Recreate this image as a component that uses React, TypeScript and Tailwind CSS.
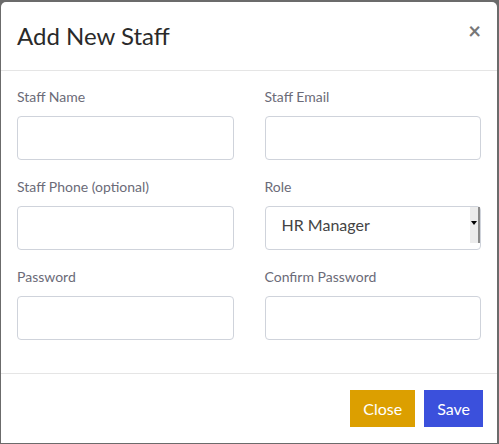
import React from "react";

function Field({ label, type = "text" }: { label: string; type?: string }) {
  return (
    <div className="mb-4">
      <label className="mb-2 block text-[14px] leading-[22px] text-[#6b6b78]">{label}</label>
      <input
        type={type}
        className="block h-[44px] w-full rounded-[4px] border border-[#cfd3db] bg-white px-3 text-[16px] text-[#444] outline-none"
      />
    </div>
  );
}

export default function App() {
  return (
    <div
      className="h-screen overflow-hidden bg-[#6b6b6b] pl-[1px] pr-[2px] pt-[2px]"
      style={{ fontFamily: "Lato, 'Open Sans', sans-serif" }}
    >
      <div className="rounded-t-[5px] bg-white">
        {/* header */}
        <div className="flex items-start justify-between border-b border-[#e5e5e5] px-4 py-4">
          <h1 className="text-[24px] font-normal leading-[36px] text-[#2a2a2a]">Add New Staff</h1>
          <button className="mt-[2px] text-[22px] font-bold leading-[22px] text-[#777]">×</button>
        </div>

        {/* body */}
        <div className="grid grid-cols-2 gap-x-[31px] px-4 pb-[17px] pt-[15px]">
          <Field label="Staff Name" />
          <Field label="Staff Email" type="email" />
          <Field label="Staff Phone (optional)" />
          <div className="mb-4">
            <label className="mb-2 block text-[14px] leading-[22px] text-[#6b6b78]">Role</label>
            <div className="relative h-[44px] w-full rounded-[4px] border border-[#cfd3db] bg-white">
              <span className="absolute left-4 top-0 text-[16px] leading-[36px] text-[#444]">HR Manager</span>
              <div className="absolute right-0 top-0 flex h-[36px] w-[10px] justify-center border-r-2 border-[#8a8a8a] bg-[#ececec] pt-[14px]">
                <div className="h-0 w-0 border-x-[3px] border-t-[4px] border-x-transparent border-t-black" />
              </div>
            </div>
          </div>
          <Field label="Password" type="password" />
          <Field label="Confirm Password" type="password" />
        </div>

        {/* footer */}
        <div className="flex justify-end gap-[9px] border-t border-[#e5e5e5] pb-4 pr-[14px] pt-4">
          <button className="h-[37px] bg-[#dc9f00] px-[13px] text-[16px] text-white">Close</button>
          <button className="h-[37px] bg-[#3b50dc] px-[13px] text-[16px] text-white">Save</button>
        </div>
      </div>
    </div>
  );
}
